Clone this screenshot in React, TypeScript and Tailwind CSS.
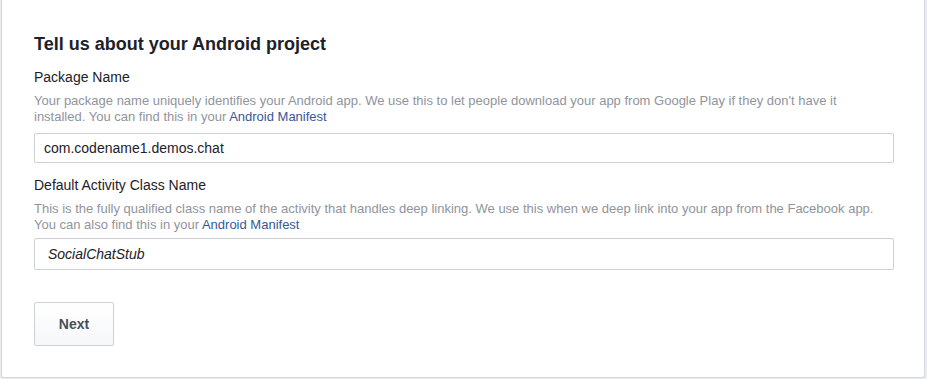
import React from "react";

const font = { fontFamily: '"Liberation Sans", Helvetica, Arial, sans-serif' };

export default function App() {
  return (
    <div className="min-h-[379px] w-[927px] bg-[#e9ebee] pl-px pr-[2px] pb-[1px]" style={font}>
      <div className="bg-white border-x border-b border-[#d3d6db] rounded-b-[3px] pl-8 pr-[30px] pt-[33px] pb-[31px]">
        <h2 className="text-[18px] leading-[22px] font-bold text-[#1d2129]">
          Tell us about your Android project
        </h2>

        <label className="block mt-[13px] text-[14px] leading-[18px] text-[#1d2129]">
          Package Name
        </label>
        <p className="mt-[7px] text-[13px] leading-[16px] text-[#90949c]">
          Your package name uniquely identifies your Android app. We use this to let people download your app from Google Play if they don't have it
          <br />
          installed. You can find this in your <a href="#" className="text-[#365899]">Android Manifest</a>
        </p>
        <input
          className="mt-[8px] block w-full h-[30px] border border-[#ccd0d5] rounded-[2px] px-[9px] text-[14px] text-[#1d2129] outline-none"
          defaultValue="com.codename1.demos.chat"
        />

        <label className="block mt-[13px] text-[14px] leading-[18px] text-[#1d2129]">
          Default Activity Class Name
        </label>
        <p className="mt-[7px] text-[13px] leading-[16px] text-[#90949c]">
          This is the fully qualified class name of the activity that handles deep linking. We use this when we deep link into your app from the Facebook app.
          <br />
          You can also find this in your <a href="#" className="text-[#365899]">Android Manifest</a>
        </p>
        <input
          className="mt-[5px] block w-full h-[32px] border border-[#ccd0d5] rounded-[2px] px-[13px] text-[14px] italic text-[#1d2129] outline-none"
          defaultValue="SocialChatStub"
        />

        <button
          type="button"
          className="mt-[32px] block w-[80px] h-[44px] border border-[#ced0d4] rounded-[2px] bg-gradient-to-b from-white to-[#f6f7f9] text-[14px] font-bold text-[#4b4f56]"
        >
          Next
        </button>
      </div>
    </div>
  );
}
